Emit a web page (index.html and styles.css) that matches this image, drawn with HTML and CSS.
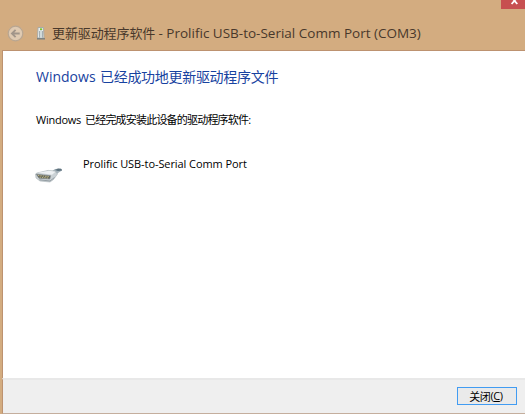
FILE: index.html
```
<!DOCTYPE html>
<html lang="zh-CN">
<head>
<meta charset="utf-8">
<title>更新驱动程序软件</title>
<link rel="stylesheet" href="styles.css">
</head>
<body>
<div class="window">
  <header class="titlebar">
    <svg class="back" width="17" height="17" viewBox="0 0 17 17"><circle cx="8.5" cy="8.5" r="7.3" fill="#dfcab2" stroke="#b9a691" stroke-width="1.2"/><path d="M12.7 8.5H5M8.6 4.8L4.9 8.5L8.6 12.2" fill="none" stroke="#a1958a" stroke-width="1.8"/></svg>
    <svg class="device" width="8" height="13" viewBox="0 0 8 13"><path d="M1 .5H6.5L7 11H.5Z" fill="#e8eeee" stroke="#a9aba7"/><path d="M3 2H5V10.5H3Z" fill="#d1dada"/><path d="M3 2.2H5.2" stroke="#7ac32d" stroke-width="1.7"/><path d="M2.5 4V10.5M5.5 4V10.5" stroke="#88949a" stroke-width=".7"/><path d="M0 11.8H8" stroke="#777e80" stroke-width="1.4"/></svg>
    <h1 class="title"><span class="title-cn">更新驱动程序软件</span><span class="title-en"> - Prolific USB-to-Serial Comm Port (COM3)</span></h1>
    <div class="close-box"><svg width="24" height="9" viewBox="0 0 24 9"><path d="M10.6 -2.6L16.3 4M16.3 -2.6L10.6 4" stroke="#fff" stroke-width="1.8"/></svg></div>
  </header>
  <main class="content">
    <h2 class="heading"><span class="heading-en">Windows</span><span class="heading-cn">已经成功地更新驱动程序文件</span></h2>
    <p class="message"><span class="message-en">Windows</span><span class="message-cn">已经完成安装此设备的驱动程序软件:</span></p>
    <div class="item">
      <svg class="plug" width="29" height="17" viewBox="0 0 29 17">
        <path d="M16 5L20 2L26 1.5L27 3.5L23 6L19 10Z" fill="#a5b2ba"/>
        <path d="M20 3L23 1.6L26.5 2L27 3.5L23 4Z" fill="#5e727e"/>
        <path d="M.5 7L2 6L13 3.4L20 4L22.5 7L18.5 12.5L15 15L5 14L1 11Z" fill="#cbd2d6" stroke="#a8b1b6" stroke-width=".6"/>
        <path d="M3 5.8L14 3.7L20.5 4.7L17 7.7Z" fill="#eef1f3"/>
        <path d="M1.3 7.2L15.5 8.7L14.8 12L4 11.2Z" fill="#5a5e55" stroke="#858c8e" stroke-width=".7"/>
        <path d="M3 8.4L14.4 9.8M4.5 10.1L14 11.1" stroke="#cfc58a" stroke-width=".9" stroke-dasharray="1.4 1"/>
        <path d="M4.5 12.8L15 14L19.5 10.5" fill="none" stroke="#8d979d" stroke-width=".9"/>
      </svg>
      <span class="device-name">Prolific USB-to-Serial Comm Port</span>
    </div>
  </main>
  <footer class="footer"><button class="close-button"><span class="close-cn">关闭</span><span>(<u>C</u>)</span></button></footer>
</div>
</body>
</html>
```
FILE: styles.css
```
* { box-sizing: border-box; }
body { margin: 0; overflow: hidden; background: #d3ac80; font-family: "Open Sans", "Noto Sans CJK SC", sans-serif; }
.window { width: 525px; height: 414px; display: grid; grid-template-rows: 50px 328px 36px; padding-left: 2px; }
.titlebar { display: flex; align-items: flex-start; height: 50px; padding-left: 5px; }
.back { margin-top: 25px; }
.device { margin: 27px 0 0 13px; }
.title { display: flex; flex: 1; margin: 23px 0 0 7px; color: #48382b; font-size: 13px; line-height: 20px; font-weight: 400; white-space: pre; }
.title-cn { width: 103px; letter-spacing: -.1px; }
.title-en { font-size: 13.5px; }
.close-box { width: 24px; height: 9px; background: #c75050; }
.close-box svg { display: block; }
.content { border-top: 1px solid #bd9270; border-left: 1px solid #bd9270; background: #fff; padding: 16px 0 0 33px; }
.heading, .message { display: flex; margin: 0; font-weight: 400; white-space: nowrap; }
.heading { height: 20px; line-height: 20px; color: #1742a0; font-size: 14px; }
.heading-en { width: 64px; letter-spacing: 0; }
.heading-cn { letter-spacing: -.3px; }
.message { margin-top: 25px; height: 16px; line-height: 16px; color: #000; font-size: 11px; }
.message-en { width: 49px; letter-spacing: -.25px; }
.message-cn { letter-spacing: -.8px; }
.item { display: flex; margin-top: 28px; }
.plug { margin-top: 11px; margin-left: -1px; }
.device-name { margin-left: 19px; line-height: 16px; font-size: 11px; letter-spacing: -.08px; color: #000; white-space: nowrap; }
.footer { display: flex; justify-content: flex-end; padding: 7px 8px 0 0; background: #efefef; border-top: 2px solid #e8e8e8; border-left: 1px solid #bd9270; border-bottom: 1px solid #c4ae9d; }
.close-button { display: flex; align-items: center; justify-content: center; width: 60px; height: 18px; padding: 0 2px 1px 0; border: 1px solid #429cf2; background: #eaeaea; color: #000; font: 11px "Open Sans", "Noto Sans CJK SC", sans-serif; letter-spacing: -.4px; }
```
